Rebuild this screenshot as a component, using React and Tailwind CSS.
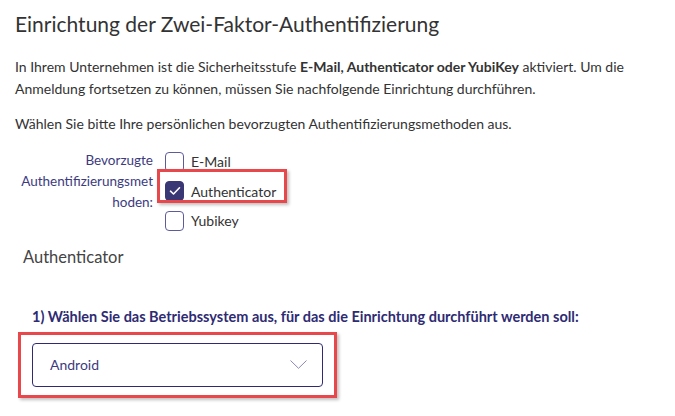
import React from 'react';

function Checkbox({ checked }) {
  return (
    <span
      className={
        'flex h-[20px] w-[19px] shrink-0 items-center justify-center rounded-[4px] border-[1.5px] ' +
        (checked ? 'border-[#3a3775] bg-[#3a3775]' : 'border-[#5d5b99] bg-white')
      }
    >
      {checked && (
        <svg width="12" height="10" viewBox="0 0 12 10" fill="none">
          <path d="M1.5 5.2 L4.5 8 L10.5 1.8" stroke="white" strokeWidth="1.6" strokeLinecap="round" strokeLinejoin="round" />
        </svg>
      )}
    </span>
  );
}

function Option({ label, checked }) {
  return (
    <div className="flex h-[29.5px] items-center gap-[7px]">
      <Checkbox checked={checked} />
      <span className="text-[14px] text-[#333]">{label}</span>
    </div>
  );
}

export default function App() {
  return (
    <div className="h-[416px] w-[675px] overflow-hidden bg-white font-['Lato',sans-serif] text-[#333]">
      <div className="pl-[15px] pt-[11px]">
        <h1 className="text-[21px] leading-[26px] text-[#333]">Einrichtung der Zwei-Faktor-Authentifizierung</h1>

        <p className="mt-[19px] text-[14px] leading-[22px]">
          In Ihrem Unternehmen ist die Sicherheitsstufe <b className="font-bold">E-Mail, Authenticator oder YubiKey</b> aktiviert. Um die
          <br />
          Anmeldung fortsetzen zu können, müssen Sie nachfolgende Einrichtung durchführen.
        </p>

        <p className="mt-[13px] text-[14px] leading-[21px]">
          Wählen Sie bitte Ihre persönlichen bevorzugten Authentifizierungsmethoden aus.
        </p>
      </div>

      <div className="mt-[16px] flex">
        <div className="w-[155px] shrink-0 pr-[2px] text-right text-[13.5px] leading-[21px] text-[#3d3b80]">
          <div>Bevorzugte</div>
          <div>Authentifizierungsmet</div>
          <div>hoden:</div>
        </div>
        <div className="ml-[10px] -mt-[3px]">
          <Option label="E-Mail" />
          <div className="relative">
            <Option label="Authenticator" checked />
            <span className="pointer-events-none absolute -left-[8px] top-[-8px] h-[34px] w-[130px] border-[3px] border-[#e8484b] shadow-[2px_2px_3px_rgba(0,0,0,0.25)]" />
          </div>
          <Option label="Yubikey" />
        </div>
      </div>

      <h2 className="ml-[23px] mt-[9px] text-[16.5px] leading-[24px] text-[#444]">Authenticator</h2>

      <p className="ml-[32px] mt-[38px] text-[14.5px] font-bold leading-[20px] text-[#2e2b73]">
        1) Wählen Sie das Betriebssystem aus, für das die Einrichtung durchführt werden soll:
      </p>

      <div className="ml-[18px] mt-[5px] w-[319px] border-[3px] border-[#e8484b] px-[11px] py-[8px] shadow-[2px_2px_3px_rgba(0,0,0,0.25)]">
        <div className="flex h-[44px] w-[291px] items-center justify-between rounded-[4px] border-[1.5px] border-[#2e2b73] pl-[17px] pr-[15px]">
          <span className="text-[14px] text-[#3d3b80]">Android</span>
          <svg width="17" height="9" viewBox="0 0 17 9" fill="none">
            <path d="M0.5 0.5 L8.5 8.3 L16.5 0.5" stroke="#8b89b5" strokeWidth="1" />
          </svg>
        </div>
      </div>
    </div>
  );
}
